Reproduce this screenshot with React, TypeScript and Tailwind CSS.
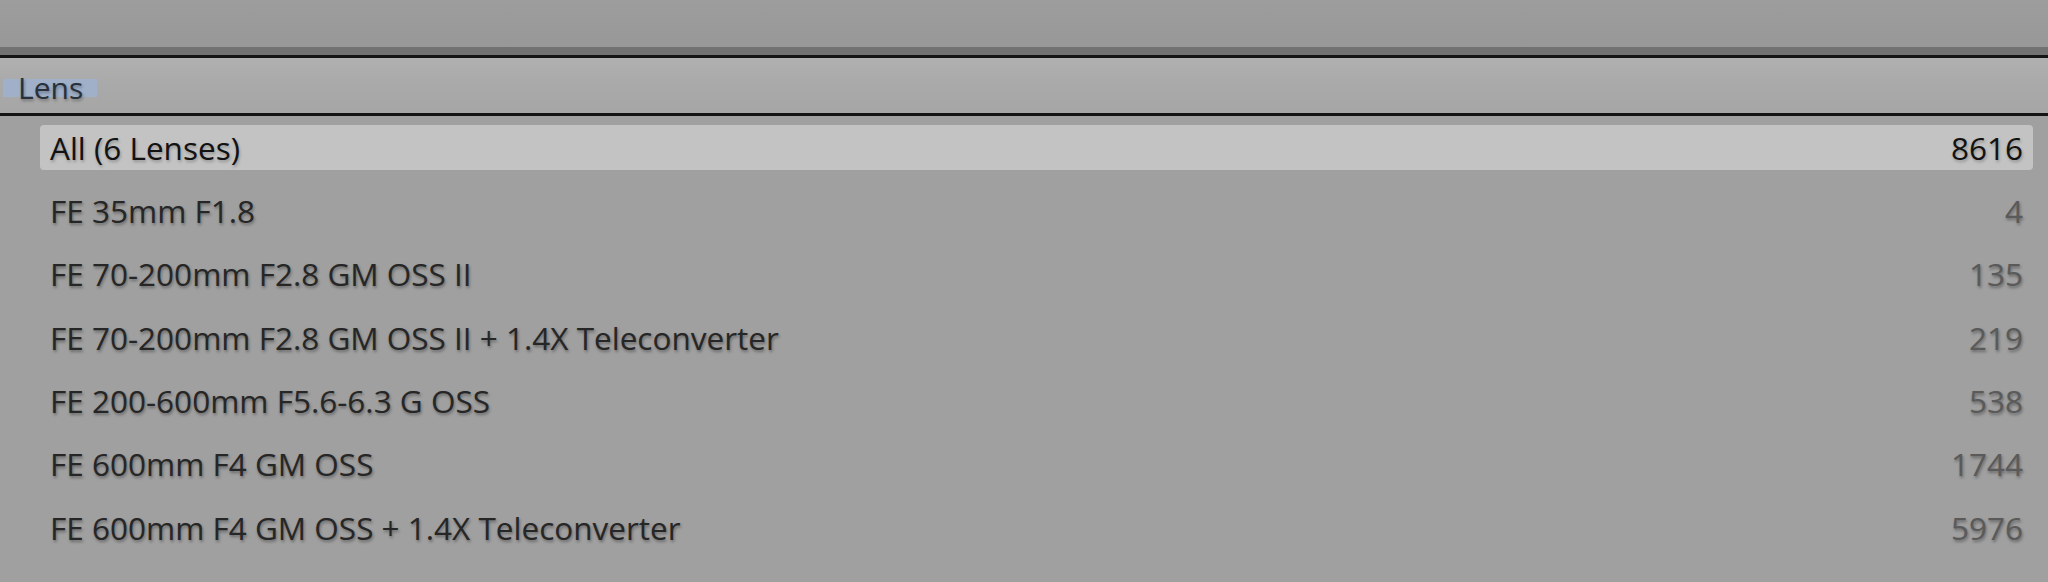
import React from "react";

const lenses: { name: string; count: string }[] = [
  { name: "FE 35mm F1.8", count: "4" },
  { name: "FE 70-200mm F2.8 GM OSS II", count: "135" },
  { name: "FE 70-200mm F2.8 GM OSS II + 1.4X Teleconverter", count: "219" },
  { name: "FE 200-600mm F5.6-6.3 G OSS", count: "538" },
  { name: "FE 600mm F4 GM OSS", count: "1744" },
  { name: "FE 600mm F4 GM OSS + 1.4X Teleconverter", count: "5976" },
];

export default function App() {
  return (
    <div className="w-[2048px] h-[582px] overflow-hidden bg-[#a0a0a0] font-['Open_Sans',sans-serif] text-[31.5px]">
      <div className="h-[47px] bg-gradient-to-b from-[#9d9d9d] to-[#989898]" />
      <div className="h-[8px] bg-[#727272]" />
      <div className="h-[3px] bg-[#141414]" />
      <div className="h-[55px] bg-gradient-to-b from-[#b0b0b0] via-[#a9a9a9] to-[#a6a6a6] pt-[21px] pl-[3px] flex items-start">
        <span className="inline-block h-[18px] leading-[18px] pl-[15px] pr-[14px] bg-[#9fb0c8] text-[#28303c] text-[30px] [text-shadow:1px_2px_3px_rgba(0,0,0,0.3)]">
          Lens
        </span>
      </div>
      <div className="h-[3px] bg-[#141414]" />
      <div className="flex flex-col">
        <div className="h-[63.33px] pl-[40px] pr-[15px] flex items-center">
          <div className="flex-1 h-[45px] rounded-[4px] bg-[#c3c3c3] px-[10px] flex items-center justify-between leading-[44px] text-[#121212] [text-shadow:1px_2px_3px_rgba(0,0,0,0.25)]">
            <span>All (6 Lenses)</span>
            <span>8616</span>
          </div>
        </div>
        {lenses.map((l) => (
          <div key={l.name} className="h-[63.33px] pl-[40px] pr-[15px] flex items-center">
            <div className="flex-1 h-[45px] px-[10px] flex items-center justify-between leading-[44px] [text-shadow:1px_2px_3px_rgba(0,0,0,0.35)]">
              <span className="text-[#262626]">{l.name}</span>
              <span className="text-[#5a5a5a]">{l.count}</span>
            </div>
          </div>
        ))}
      </div>
    </div>
  );
}
